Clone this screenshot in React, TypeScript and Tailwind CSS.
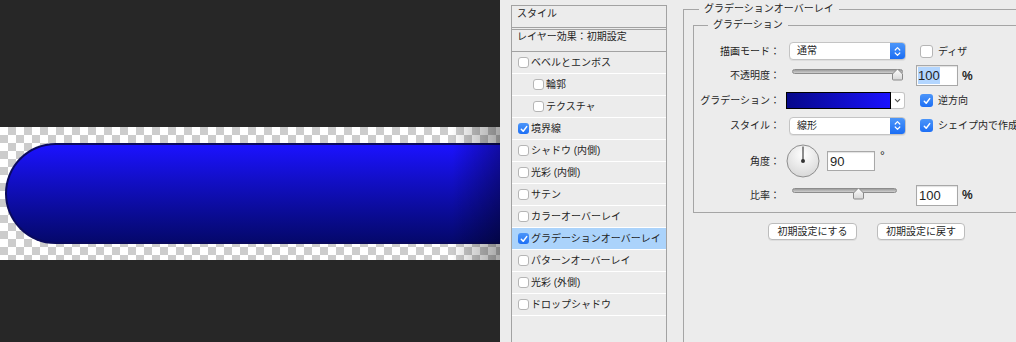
import React from 'react';

const layers: { label: string; indent?: boolean; checked?: boolean; active?: boolean }[] = [
  { label: 'ベベルとエンボス' },
  { label: '輪郭', indent: true },
  { label: 'テクスチャ', indent: true },
  { label: '境界線', checked: true },
  { label: 'シャドウ (内側)' },
  { label: '光彩 (内側)' },
  { label: 'サテン' },
  { label: 'カラーオーバーレイ' },
  { label: 'グラデーションオーバーレイ', checked: true, active: true },
  { label: 'パターンオーバーレイ' },
  { label: '光彩 (外側)' },
  { label: 'ドロップシャドウ' },
];

const Box = ({ checked, small }: { checked?: boolean; small?: boolean }) =>
  checked ? (
    <span
      className={`${small ? 'w-[11px] h-[11px]' : 'w-[13px] h-[13px]'} rounded-[3px] bg-gradient-to-b from-[#4b95f9] to-[#1d6ff5] flex items-center justify-center shrink-0`}
    >
      <svg width="8" height="8" viewBox="0 0 8 8">
        <path d="M1.3 4.3 L3.2 6.2 L6.7 1.6" stroke="white" strokeWidth="1.5" fill="none" strokeLinecap="round" strokeLinejoin="round" />
      </svg>
    </span>
  ) : (
    <span
      className={`${small ? 'w-[11px] h-[11px]' : 'w-[13px] h-[13px]'} block rounded-[3px] bg-white border border-[#b5b5b5] shrink-0`}
    />
  );

const Select = ({ value }: { value: string }) => (
  <div className="ml-[9px] w-[117px] h-[18px] flex rounded-[4px] border border-[#c4c4c4] bg-white overflow-hidden shadow-[0_1px_0_rgba(0,0,0,0.06)]">
    <span className="flex-1 pl-[7px] leading-[16px]">{value}</span>
    <span className="w-[15px] h-full bg-gradient-to-b from-[#4c96f9] to-[#1a6df4] flex items-center justify-center">
      <svg width="7" height="11" viewBox="0 0 7 11">
        <path d="M1.2 4 L3.5 1.7 L5.8 4 M1.2 7 L3.5 9.3 L5.8 7" stroke="white" strokeWidth="1.2" fill="none" strokeLinecap="round" strokeLinejoin="round" />
      </svg>
    </span>
  </div>
);

const Thumb = () => (
  <svg width="13" height="13" viewBox="0 0 13 13">
    <defs>
      <linearGradient id="th" x1="0" y1="0" x2="0" y2="1">
        <stop offset="0" stopColor="#ffffff" />
        <stop offset="1" stopColor="#d6d6d6" />
      </linearGradient>
    </defs>
    <path d="M1.5 11 V6 L6.5 1 L11.5 6 V11 Q11.5 12 10.5 12 H2.5 Q1.5 12 1.5 11 Z" fill="url(#th)" stroke="#8a8a8a" strokeWidth="1" />
  </svg>
);

const Slider = ({ className, thumb }: { className: string; thumb: string }) => (
  <div className={`relative h-[14px] ${className}`}>
    <div className="h-[5px] rounded-full border border-[#8c8c8c] bg-gradient-to-b from-[#9d9d9d] to-[#cfcfcf]" />
    <div className={`absolute top-[-1px] ${thumb}`}>
      <Thumb />
    </div>
  </div>
);

const Field = ({ value, className, selected }: { value: string; className: string; selected?: boolean }) => (
  <div
    className={`${className} bg-white border border-[#a8a8a8] shadow-[inset_0_1px_1px_rgba(0,0,0,0.12)] pl-[1px] flex items-center font-['Liberation_Sans',sans-serif] text-[13px]`}
  >
    <span className={selected ? 'bg-[#b3d6ff] leading-[17px]' : 'leading-[17px] pl-[1px]'}>{value}</span>
  </div>
);

const Label = ({ children }: { children: React.ReactNode }) => (
  <span className="w-[86px] text-right shrink-0">{children}</span>
);

export default function App() {
  return (
    <div className="w-[1016px] h-[342px] flex overflow-hidden bg-[#ececec] text-[#1f1f1f] text-[10px] font-['Liberation_Sans','Noto_Sans_CJK_JP',sans-serif]">
      {/* canvas */}
      <div className="w-[500px] h-full shrink-0 bg-[#272727]">
        <div className="relative mt-[127px] h-[133px] overflow-hidden pt-[16px] pl-[5px] bg-[image:conic-gradient(#cccccc_25%,#ffffff_0_50%,#cccccc_0_75%,#ffffff_0)] bg-[length:16px_16px]">
          <div className="w-[600px] h-[101px] rounded-l-full border-2 border-r-0 border-[#0a0a5e] bg-gradient-to-b from-[#1b12ff] to-[#05086c]" />
          <div className="absolute right-0 top-0 h-full w-[48px] bg-gradient-to-r from-transparent to-black/35" />
        </div>
      </div>

      {/* layer style list */}
      <div className="ml-[11px] mt-[5px] w-[156px] h-[337px] shrink-0 border-t border-l border-r border-[#a2a2a2] flex flex-col">
        <div className="h-[22px] border-b border-[#a2a2a2] pl-[5px] pt-[1px] leading-[14px]">スタイル</div>
        <div className="mt-[1px] h-[23px] border-t border-b border-[#a2a2a2] pl-[5px] leading-[14px]">
          レイヤー効果：初期設定
        </div>
        {layers.map((l) => (
          <div
            key={l.label}
            className={`h-[22px] border-b border-white flex items-center ${l.indent ? 'pl-[21px]' : 'pl-[6px]'} ${l.active ? 'bg-[#abd3fb]' : ''}`}
          >
            <Box checked={l.checked} small />
            <span className="ml-[2px]">{l.label}</span>
          </div>
        ))}
      </div>

      {/* gradient overlay settings */}
      <fieldset className="ml-[16px] mt-[2px] w-[400px] h-[400px] shrink-0 border-l border-t border-[#a5a5a5]">
        <legend className="ml-[15px] px-[5px] leading-[14px]">グラデーションオーバーレイ</legend>
        <div className="pl-[9px]">
          <fieldset className="mt-[2px] w-[340px] border border-[#a5a5a5] pt-[7px] pb-[6px]">
            <legend className="ml-[14px] px-[5px] leading-[14px]">グラデーション</legend>

            <div className="h-[24px] flex items-center">
              <Label>描画モード：</Label>
              <Select value="通常" />
              <span className="ml-[14px]"><Box /></span>
              <span className="ml-[5px]">ディザ</span>
            </div>

            <div className="h-[25px] flex items-center">
              <Label>不透明度：</Label>
              <Slider className="ml-[12px] w-[111px]" thumb="left-[99px]" />
              <Field value="100" selected className="ml-[13px] w-[42px] h-[21px]" />
              <span className="ml-[4px] text-[12px] font-bold font-['Liberation_Sans',sans-serif]">%</span>
            </div>

            <div className="h-[25px] flex items-center">
              <Label>グラデーション：</Label>
              <div className="ml-[6px] w-[105px] h-[17px] border border-black bg-gradient-to-r from-[#06088a] to-[#1b12ff]" />
              <div className="w-[14px] h-[17px] bg-white border border-l-0 border-[#c4c4c4] rounded-r-[3px] flex items-center justify-center">
                <svg width="7" height="5" viewBox="0 0 7 5">
                  <path d="M1 1.2 L3.5 3.7 L6 1.2" stroke="#555" strokeWidth="1.1" fill="none" />
                </svg>
              </div>
              <span className="ml-[15px]"><Box checked /></span>
              <span className="ml-[5px]">逆方向</span>
            </div>

            <div className="h-[25px] flex items-center">
              <Label>スタイル：</Label>
              <Select value="線形" />
              <span className="ml-[14px]"><Box checked /></span>
              <span className="ml-[5px] whitespace-nowrap">シェイプ内で作成</span>
            </div>

            <div className="h-[46px] flex items-center">
              <Label>角度：</Label>
              <svg className="ml-[6px] shrink-0" width="34" height="34" viewBox="0 0 34 34">
                <defs>
                  <radialGradient id="dial" cx="0.5" cy="0.3" r="0.7">
                    <stop offset="0" stopColor="#ffffff" />
                    <stop offset="1" stopColor="#d8d8d8" />
                  </radialGradient>
                </defs>
                <circle cx="17" cy="17" r="16" fill="url(#dial)" stroke="#8e8e8e" strokeWidth="1" />
                <line x1="17" y1="17" x2="17" y2="2.5" stroke="#333" strokeWidth="1.1" />
                <circle cx="17" cy="17" r="2" fill="#333" />
              </svg>
              <Field value="90" className="ml-[7px] w-[48px] h-[20px]" />
              <span className="ml-[5px] self-start mt-[9px] text-[12px] font-['Liberation_Sans',sans-serif]">°</span>
            </div>

            <div className="h-[22px] flex items-center">
              <Label>比率：</Label>
              <Slider className="ml-[12px] w-[105px]" thumb="left-[60px]" />
              <Field value="100" className="ml-[19px] w-[42px] h-[21px]" />
              <span className="ml-[4px] text-[12px] font-bold font-['Liberation_Sans',sans-serif]">%</span>
            </div>
          </fieldset>

          <div className="mt-[10px] pl-[75px] flex gap-[20px]">
            <button className="w-[89px] h-[17px] bg-white border border-[#bcbcbc] rounded-[4px] shadow-[0_1px_0_rgba(0,0,0,0.06)] leading-[15px]">
              初期設定にする
            </button>
            <button className="w-[88px] h-[17px] bg-white border border-[#bcbcbc] rounded-[4px] shadow-[0_1px_0_rgba(0,0,0,0.06)] leading-[15px]">
              初期設定に戻す
            </button>
          </div>
        </div>
      </fieldset>
    </div>
  );
}
